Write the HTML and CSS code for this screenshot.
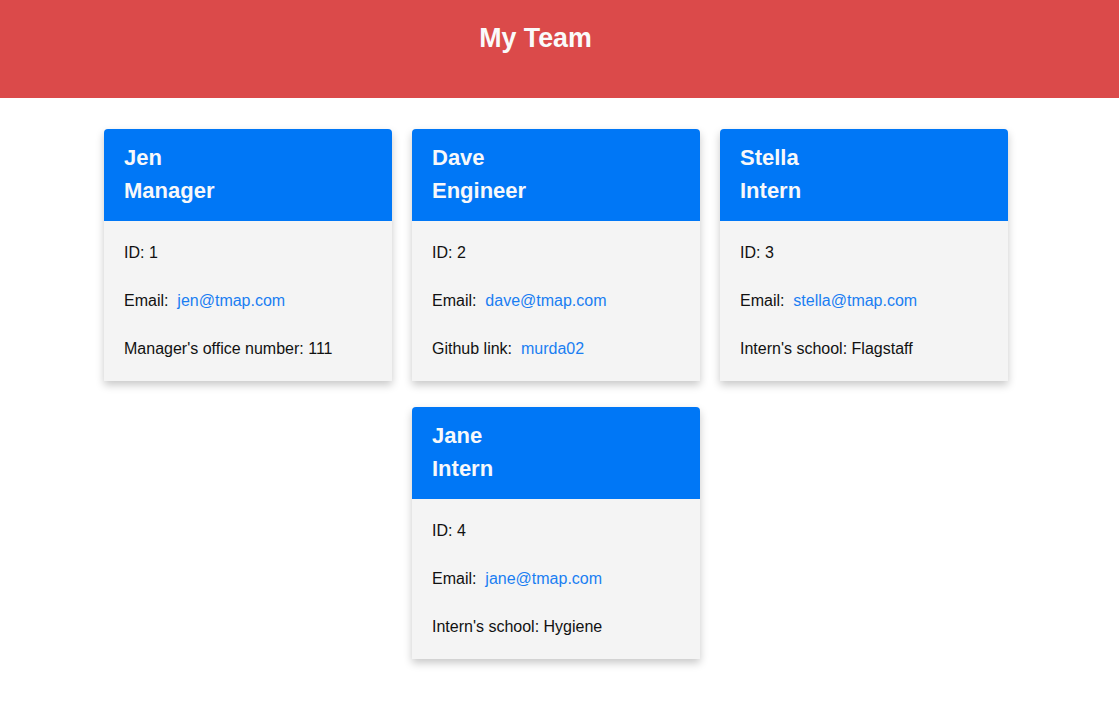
FILE: index.html
```html
<!DOCTYPE html>
<html lang="en">
<head>
<meta charset="utf-8">
<title>My Team</title>
<link rel="stylesheet" href="styles.css">
</head>
<body>
<header class="banner">
  <h1 class="banner-title">My Team</h1>
</header>
<main class="team">
  <div class="card">
    <div class="card-head"><h2 class="card-name">Jen<br>Manager</h2></div>
    <div class="card-body">
      <p class="line">ID: 1</p>
      <p class="line">Email:&nbsp; <a class="link" href="#">jen@tmap.com</a></p>
      <p class="line">Manager's office number: 111</p>
    </div>
  </div>
  <div class="card">
    <div class="card-head"><h2 class="card-name">Dave<br>Engineer</h2></div>
    <div class="card-body">
      <p class="line">ID: 2</p>
      <p class="line">Email:&nbsp; <a class="link" href="#">dave@tmap.com</a></p>
      <p class="line">Github link:&nbsp; <a class="link" href="#">murda02</a></p>
    </div>
  </div>
  <div class="card">
    <div class="card-head"><h2 class="card-name">Stella<br>Intern</h2></div>
    <div class="card-body">
      <p class="line">ID: 3</p>
      <p class="line">Email:&nbsp; <a class="link" href="#">stella@tmap.com</a></p>
      <p class="line">Intern's school: Flagstaff</p>
    </div>
  </div>
  <div class="card">
    <div class="card-head"><h2 class="card-name">Jane<br>Intern</h2></div>
    <div class="card-body">
      <p class="line">ID: 4</p>
      <p class="line">Email:&nbsp; <a class="link" href="#">jane@tmap.com</a></p>
      <p class="line">Intern's school: Hygiene</p>
    </div>
  </div>
</main>
</body>
</html>
```
FILE: styles.css
```css
* { box-sizing: border-box; }
html, body {
  margin: 0;
  padding: 0;
  background: #ffffff;
  font-family: "Liberation Sans", Arial, sans-serif;
  color: #111111;
}
.banner {
  height: 98px;
  background: #db4a4a;
  padding: 22px 48px 0 0;
  text-align: center;
}
.banner-title {
  margin: 0;
  font-size: 26.8px;
  line-height: 1.2;
  font-weight: 700;
  color: #fafafa;
}
.team {
  width: 904px;
  margin: 31px 0 30px 104px;
  display: flex;
  flex-wrap: wrap;
  justify-content: center;
  column-gap: 20px;
  row-gap: 26px;
}
.card {
  width: 288px;
  border-radius: 4px 4px 0 0;
  box-shadow: 0 4px 9px rgba(0, 0, 0, 0.22);
  background: #f4f4f4;
}
.card-head {
  background: #0077f6;
  border-radius: 4px 4px 0 0;
  padding: 12px 20px 14px;
}
.card-name {
  margin: 0;
  font-size: 22px;
  line-height: 33px;
  font-weight: 700;
  color: #f7f8fa;
}
.card-body {
  padding: 20px;
}
.line {
  margin: 0 0 24px;
  font-size: 16px;
  line-height: 24px;
}
.line:last-child { margin-bottom: 0; }
.link {
  color: #1a7ef2;
  text-decoration: none;
}
```
